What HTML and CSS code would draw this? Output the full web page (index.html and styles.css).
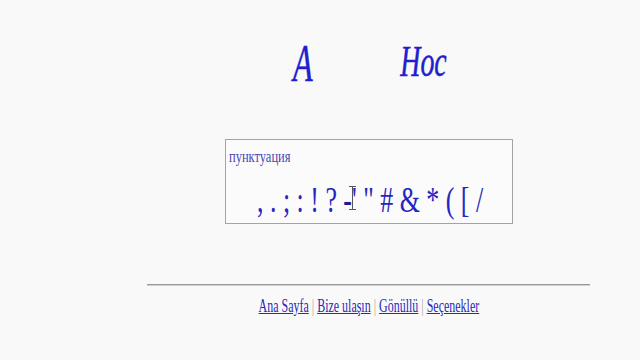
FILE: index.html
```html
<!DOCTYPE html>
<html lang="tr">
<head>
<meta charset="utf-8">
<title>A Hoc</title>
<link rel="stylesheet" href="styles.css">
</head>
<body>
<div class="content">
  <div class="titles">
    <div class="title title-a"><span class="sq sq-title">A</span></div>
    <div class="title title-hoc"><span class="sq sq-title">Hoc</span></div>
  </div>
  <div class="panel">
    <div class="label"><span class="sq sq-label">пунктуация</span></div>
    <div class="punct"><span class="sq sq-punct">, . ; : ! ? <b class="dash">-</b>' " # &amp; * ( [ /</span><span class="cursor" aria-hidden="true"></span></div>
  </div>
  <hr class="rule">
  <div class="links"><span class="sq sq-links"><a href="#">Ana Sayfa</a> <span class="sep">|</span> <a href="#">Bize ulaşın</a> <span class="sep">|</span> <a href="#">Gönüllü</a> <span class="sep">|</span> <a href="#">Seçenekler</a></span></div>
</div>
</body>
</html>
```
FILE: styles.css
```css
html, body {
  margin: 0;
  padding: 0;
  background: #f9f9f9;
}
body {
  width: 640px;
  height: 360px;
  overflow: hidden;
  font-family: "Liberation Serif", "Times New Roman", serif;
  color: #2222c4;
}
.content {
  margin-left: 147px;
  width: 443px;
  display: flex;
  flex-direction: column;
  align-items: center;
}
.sq {
  display: inline-block;
  white-space: nowrap;
  transform-origin: center;
}
.sq-title {
  transform: scaleX(0.62);
  -webkit-text-stroke: 0.5px currentColor;
}
.sq-label {
  transform: scaleX(0.78);
  transform-origin: left;
}
.sq-punct {
  transform: scaleX(0.72);
}
.sq-links {
  transform: scaleX(0.665);
}
.titles {
  display: flex;
  align-items: flex-start;
  gap: 88px;
  height: 139px;
  margin-left: 1px;
}
.title {
  display: flex;
  justify-content: center;
  font-style: italic;
  line-height: 1;
  color: #1f1fd0;
}
.title-a {
  width: 20px;
  font-size: 52px;
  padding-top: 38px;
}
.title-hoc {
  width: 45px;
  font-size: 45px;
  padding-top: 39px;
}
.panel {
  box-sizing: border-box;
  width: 288px;
  height: 85px;
  border: 1px solid #a3a3a8;
  background: #fbfbfb;
  padding: 9px 3px 0 3px;
  position: relative;
}
.label {
  font-size: 16px;
  line-height: 16px;
  color: #4a46b0;
  width: 150px;
}
.punct {
  display: flex;
  justify-content: center;
  font-size: 36px;
  line-height: 34px;
  margin-top: 18px;
  margin-left: 4px;
  color: #2626c0;
}
.dash {
  font-weight: bold;
  color: #1e1e90;
}
.cursor {
  position: absolute;
  left: 123px;
  top: 46px;
  width: 7px;
  height: 24px;
  border-top: 1px solid #555;
  border-bottom: 1px solid #555;
  box-sizing: border-box;
  background: linear-gradient(#555, #555) center / 1px 100% no-repeat;
}
.rule {
  width: 443px;
  margin: 60px 0 0 0;
  border: 0;
  border-top: 1px solid #9a9a9a;
  border-bottom: 1px solid #d0d0d0;
  height: 0;
}
.links {
  margin-top: 10px;
  font-size: 18px;
  line-height: 20px;
  display: flex;
  justify-content: center;
  width: 443px;
}
.links a {
  color: #2a2ab8;
  text-decoration: underline;
}
.sep {
  color: #b0a890;
}
```
